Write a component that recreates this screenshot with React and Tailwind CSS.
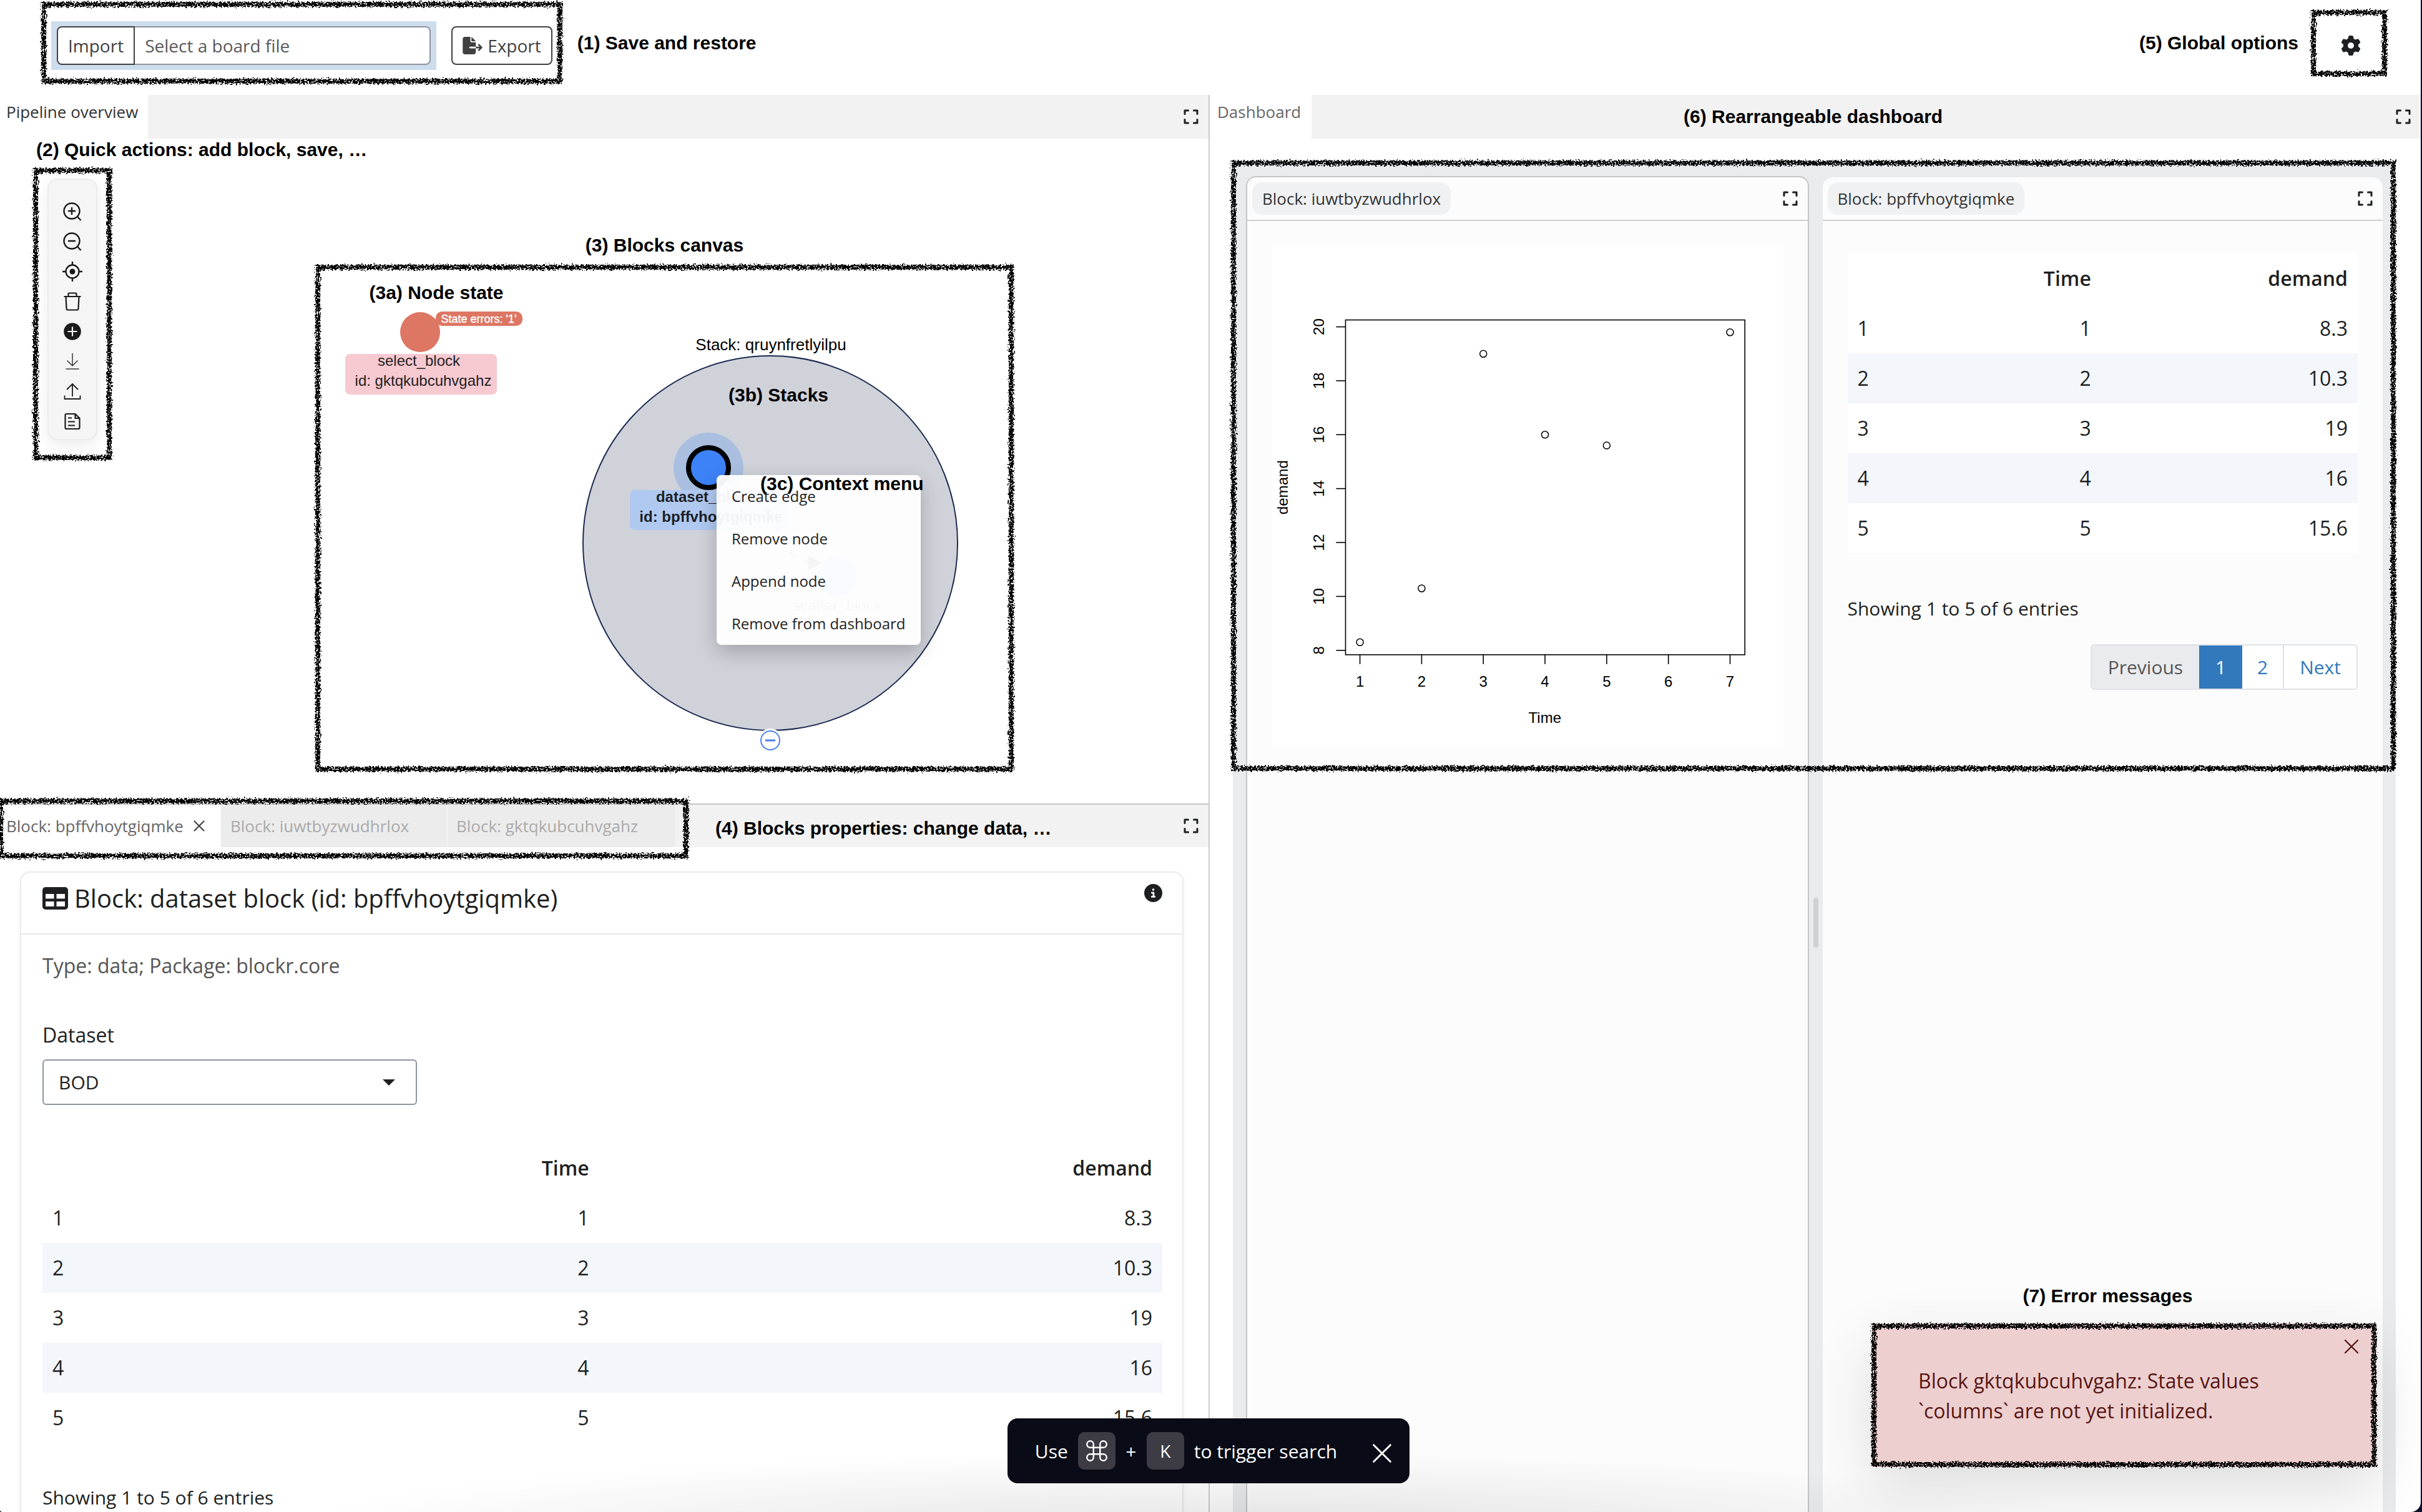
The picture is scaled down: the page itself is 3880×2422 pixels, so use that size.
import React from "react";
import { FaFileExport, FaGear, FaCircleInfo } from "react-icons/fa6";
import { Command } from "lucide-react";

const ROWS = [
  ["1", "1", "8.3"],
  ["2", "2", "10.3"],
  ["3", "3", "19"],
  ["4", "4", "16"],
  ["5", "5", "15.6"],
];

const POINTS = [
  [1, 8.3],
  [2, 10.3],
  [3, 19],
  [4, 16],
  [5, 15.6],
  [7, 19.8],
];

function RoughFilter() {
  return (
    <svg width="0" height="0" className="absolute" aria-hidden="true">
      <defs>
        <filter id="rough" x="-10%" y="-10%" width="120%" height="120%">
          <feTurbulence type="fractalNoise" baseFrequency="0.35" numOctaves="2" seed="4" result="n" />
          <feDisplacementMap in="SourceGraphic" in2="n" scale="9" xChannelSelector="R" yChannelSelector="G" result="d" />
          <feTurbulence type="fractalNoise" baseFrequency="0.4" numOctaves="2" seed="11" result="m" />
          <feColorMatrix in="m" type="matrix" values="0 0 0 0 0  0 0 0 0 0  0 0 0 0 0  -9 0 0 0 6.2" result="mask" />
          <feComposite in="d" in2="mask" operator="in" />
        </filter>
      </defs>
    </svg>
  );
}

function RoughFrame({ className = "inset-0 h-full w-full" }) {
  return (
    <svg aria-hidden="true" className={`pointer-events-none absolute overflow-visible ${className}`}>
      <rect
        x="4"
        y="4"
        className="h-[calc(100%-8px)] w-[calc(100%-8px)]"
        fill="none"
        stroke="#000"
        strokeWidth="8"
        filter="url(#rough)"
      />
    </svg>
  );
}

function Note({ children, className = "" }) {
  return (
    <p className={`font-['Liberation_Sans',sans-serif] text-[30px] leading-9 font-bold whitespace-nowrap text-black ${className}`}>
      {children}
    </p>
  );
}

function ExpandButton() {
  return (
    <button type="button" aria-label="Maximize panel" className="shrink-0 text-[#1d1f21]">
      <svg width="24" height="24" viewBox="0 0 24 24" fill="none" stroke="currentColor" strokeWidth="3">
        <path d="M7.500 2H2v5.500M16.500 2H22v5.500M7.500 22H2v-5.500M16.500 22H22v-5.500" strokeLinejoin="round" strokeLinecap="round" />
      </svg>
    </button>
  );
}

function CloseIcon({ size, stroke }) {
  return (
    <svg width={size} height={size} viewBox="0 0 24 24" fill="none" stroke="currentColor" strokeWidth={stroke} strokeLinecap="round">
      <path d="M2 2l20 20M22 2L2 22" />
    </svg>
  );
}

const TOOLS = [
  {
    label: "Zoom in",
    icon: (
      <g strokeWidth="2.400">
        <circle cx="15" cy="15" r="12.500" />
        <path d="M24 24l5.500 6M15 9v12M9 15h12" />
      </g>
    ),
  },
  {
    label: "Zoom out",
    icon: (
      <g strokeWidth="2.400">
        <circle cx="15" cy="15" r="12.500" />
        <path d="M24 24l5.500 6M9 15h12" />
      </g>
    ),
  },
  {
    label: "Center",
    icon: (
      <g strokeWidth="2.400">
        <circle cx="16" cy="16" r="10.500" />
        <circle cx="16" cy="16" r="4.500" fill="currentColor" stroke="none" />
        <path d="M16 0v6M16 26v6M0 16h6M26 16h6" />
      </g>
    ),
  },
  {
    label: "Delete",
    icon: (
      <g strokeWidth="2.200">
        <path d="M2.500 8h27M9.500 7.500V3.500q0-1 1-1h11q1 0 1 1v4M5.500 8l1 19.500q.1 2 2 2h15q1.900 0 2-2l1-19.500" />
      </g>
    ),
  },
  {
    label: "Add block",
    icon: (
      <g>
        <circle cx="16" cy="16" r="13.800" fill="currentColor" stroke="none" />
        <path d="M16 8.500v15M8.500 16h15" stroke="#f5f5f5" strokeWidth="2.200" />
      </g>
    ),
  },
  {
    label: "Download",
    icon: (
      <g strokeWidth="1.500" stroke="#333">
        <path d="M16 3v20M7.500 14.500L16 23l8.500-8.500M5.500 28h21" />
      </g>
    ),
  },
  {
    label: "Upload",
    icon: (
      <g strokeWidth="1.800">
        <path d="M16 24V4M7 13l9-9 9 9M3.500 22.500V28h25v-5.500" />
      </g>
    ),
  },
  {
    label: "Notes",
    icon: (
      <g strokeWidth="2.200">
        <path d="M20.500 4H6.500Q4.500 4 4.500 6v20q0 2 2 2h19q2 0 2-2V11zM20.500 4v7h7M9 10.500h6M9 16.500h11M9 22.500h11" />
      </g>
    ),
  },
];

function Toolbar() {
  return (
    <div className="relative mt-[11px] ml-[53px] self-start px-[23px] pt-[17px] pb-8">
      <div className="flex flex-col gap-4 rounded-2xl border-2 border-[#ececec] bg-[#f5f5f5] px-[22px] pt-[35px] pb-[12px] shadow-[0_8px_24px_rgba(0,0,0,0.08)]">
        {TOOLS.map((t) => (
          <button key={t.label} type="button" aria-label={t.label} className="text-[#1a1a1a]">
            <svg width="32" height="32" viewBox="0 0 32 32" fill="none" stroke="currentColor">
              {t.icon}
            </svg>
          </button>
        ))}
      </div>
      <RoughFrame />
    </div>
  );
}

function Graph() {
  return (
    <svg
      width="1119"
      height="812"
      viewBox="507 424 1119 812"
      className="block font-['Liberation_Sans',sans-serif]"
      fontSize="24"
      textAnchor="middle"
    >
      <circle cx="1236" cy="870" r="300" fill="#d0d2da" stroke="#1c2a50" strokeWidth="2" />
      <text x="1237" y="561" fontSize="26" fill="#000">Stack: qruynfretlyilpu</text>

      <rect x="555" y="567" width="243" height="65" rx="8" fill="#f7c9d1" />
      <circle cx="675" cy="532" r="32" fill="#dd7663" />
      <rect x="700" y="499" width="139" height="23" rx="10" fill="#dd7663" />
      <text x="769" y="517" fontSize="18" fill="#fff" stroke="#fff" strokeWidth="0.400">State errors: '1'</text>
      <text x="673" y="586" fill="#222">select_block</text>
      <text x="680" y="618" fill="#222">id: gktqkubcuhvgahz</text>

      <circle cx="1137" cy="749" r="56" fill="#aabfe0" />
      <rect x="1011" y="785" width="254" height="64" rx="8" fill="#b0c9f0" />
      <circle cx="1137" cy="749" r="32" fill="#3e82f7" stroke="#000" strokeWidth="8" />
      <path d="M1168 769Q1235 810 1248 850T1300 903" fill="none" stroke="#888" strokeWidth="3" strokeDasharray="14 12" />
      <path d="M1297 890L1319 902L1297 913Z" fill="#444" />
      <circle cx="1343" cy="923" r="32" fill="#7fb2ff" />
      <g fontWeight="bold" fill="#1c1f26">
        <text x="1133" y="804">dataset_block</text>
        <text x="1141" y="836">id: bpffvhoytgiqmke</text>
      </g>
      <text x="1343" y="978" fill="#666">scatter_block</text>

      <circle cx="1236" cy="1186" r="19" fill="#fff" />
      <circle cx="1236" cy="1186" r="15" fill="#fff" stroke="#4c7ef0" strokeWidth="2" />
      <path d="M1228 1186h16" stroke="#4c7ef0" strokeWidth="3" />
      <text x="1249" y="643" fontSize="30" fontWeight="bold" fill="#000">(3b) Stacks</text>
      <text x="701" y="479" fontSize="30" fontWeight="bold" fill="#000">(3a) Node state</text>
    </svg>
  );
}

function ContextMenu() {
  return (
    <ul className="absolute top-[337px] left-[643px] flex flex-col rounded-lg bg-white/95 shadow-[0_12px_32px_rgba(0,0,0,0.22)]">
      {["Create edge", "Remove node", "Append node", "Remove from dashboard"].map((item) => (
        <li key={item}>
          <button type="button" className="h-[68px] px-6 text-2xl whitespace-nowrap text-[#222]">
            {item}
          </button>
        </li>
      ))}
    </ul>
  );
}

function DataTable() {
  return (
    <table className="w-full table-fixed bg-white text-[32px] leading-[48px] text-[#1d1f21]">
      <thead>
        <tr className="h-[81px]">
          <th className="w-[13%] px-4" aria-label="Row" />
          <th className="px-4 text-right font-semibold">Time</th>
          <th className="w-[50.3%] px-4 text-right font-semibold">demand</th>
        </tr>
      </thead>
      <tbody>
        {ROWS.map((r) => (
          <tr key={r[0]} className="h-20 even:bg-[#f3f6fb]">
            <td className="px-4">{r[0]}</td>
            <td className="px-4 text-right">{r[1]}</td>
            <td className="px-4 text-right">{r[2]}</td>
          </tr>
        ))}
      </tbody>
    </table>
  );
}

function Header() {
  return (
    <header className="flex h-[152px] shrink-0 items-start justify-between">
      <div className="mt-[3px] ml-[66px] flex items-center gap-6">
        <div className="relative flex items-center gap-6 px-4 pt-[31px] pb-[22px] text-[28px]">
          <div className="flex bg-[#cdddee] px-[9px] py-2">
            <button type="button" className="h-[62px] rounded-l-lg border-2 border-[#404040] bg-white px-4 text-[#404040]">
              Import
            </button>
            <input
              type="text"
              readOnly
              aria-label="Board file"
              placeholder="Select a board file"
              className="h-[62px] w-[474px] rounded-r-lg border-2 border-l-0 border-[#8d959e] bg-white px-4 placeholder:text-[#595959]"
            />
          </div>
          <button type="button" className="flex h-[62px] items-center gap-2 rounded-lg border-2 border-[#404040] bg-white px-4 text-[#404040]">
            <FaFileExport className="h-7 w-8" />
            Export
          </button>
          <RoughFrame />
        </div>
        <Note>(1) Save and restore</Note>
      </div>
      <div className="mt-4 mr-[54px] flex items-center gap-5">
        <Note>(5) Global options</Note>
        <div className="relative flex h-[106px] w-[122px] items-center justify-center">
          <button type="button" aria-label="Global options" className="mt-2 ml-1.5 text-[#1d1f21]">
            <FaGear className="size-8" />
          </button>
          <RoughFrame />
        </div>
      </div>
    </header>
  );
}

function Overview() {
  return (
    <section className="flex min-h-0 flex-[1136_1_0px] flex-col">
      <div className="flex h-[70px] shrink-0 items-center justify-between bg-[#f2f2f2] pr-4">
        <button type="button" className="h-full bg-white pr-4 pb-4 pl-2.5 text-[26px] text-[#333]">
          Pipeline overview
        </button>
        <ExpandButton />
      </div>
      <Note className="ml-[58px]">(2) Quick actions: add block, save, …</Note>
      <div className="flex min-h-0 flex-1">
        <Toolbar />
        <div className="ml-[326px] flex flex-col pt-[117px]">
          <Note className="text-center">(3) Blocks canvas</Note>
          <div className="relative mt-[13px]">
            <Graph />
            <ContextMenu />
            <Note className="absolute top-[333px] left-[713px]">(3c) Context menu</Note>
            <RoughFrame />
          </div>
        </div>
      </div>
    </section>
  );
}

function Properties() {
  return (
    <section className="flex min-h-0 flex-[1134_1_0px] flex-col border-t-2 border-[#c5c5c5]">
      <div className="flex h-[68px] shrink-0 items-center bg-[#f2f2f2] pr-4 text-[26px] text-[#aaa]">
        <div className="relative flex h-full gap-0.5 pr-5">
          <div className="flex h-full w-[353px] items-center bg-white pl-2.5 text-[#666]">
            <button type="button">Block: bpffvhoytgiqmke</button>
            <button type="button" aria-label="Close tab" className="ml-4 text-[#444]">
              <CloseIcon size={18} stroke={3} />
            </button>
          </div>
          <button type="button" className="h-full w-[360px] bg-[#ececec] pl-[14px] text-left">
            Block: iuwtbyzwudhrlox
          </button>
          <button type="button" className="h-full w-[365px] bg-[#ececec] pl-[14px] text-left">
            Block: gktqkubcuhvgahz
          </button>
          <RoughFrame className="-top-2.5 -left-[3px] h-[96px] w-[calc(100%+4px)]" />
        </div>
        <Note className="ml-[44px] flex-1 pt-2">(4) Blocks properties: change data, …</Note>
        <ExpandButton />
      </div>
      <div className="min-h-0 flex-1 overflow-hidden pt-[39px] pr-10 pl-8">
        <div className="rounded-t-2xl border-2 border-[#ebebeb] bg-white pb-40 shadow-[0_2px_8px_rgba(0,0,0,0.05)]">
          <div className="flex h-[99px] items-start justify-between border-b-2 border-[#e9e9e9] pt-3.5 pr-8 pl-[34px]">
            <h2 className="flex items-center gap-2.5 text-[40px] leading-[54px] text-[#1d1f21]">
              <svg width="41" height="36" viewBox="0 0 41 36" aria-hidden="true">
                <rect width="41" height="36" rx="5" fill="#1d1f21" />
                <path d="M5 11h13.500v7.500H5zM22.500 11H36v7.500H22.500zM5 23h13.500v8H5zM22.500 23H36v8H22.500z" fill="#fff" />
              </svg>
              Block: dataset block (id: bpffvhoytgiqmke)
            </h2>
            <button type="button" aria-label="Block information" className="mt-1 text-[#1d1f21]">
              <FaCircleInfo className="size-[29px]" />
            </button>
          </div>
          <div className="flex flex-col pt-[26px] pr-8 pl-[34px] text-[32px] leading-[48px] text-[#1d1f21]">
            <p className="text-[#555]">Type: data; Package: blockr.core</p>
            <label htmlFor="dataset" className="mt-[63px]">
              Dataset
            </label>
            <div className="relative mt-[15px] w-[600px]">
              <select
                id="dataset"
                defaultValue="BOD"
                className="h-[73px] w-full appearance-none rounded-md border-2 border-[#8d959e] bg-white px-[24px] text-[30px]"
              >
                <option>BOD</option>
              </select>
              <svg width="22" height="12" viewBox="0 0 22 12" className="pointer-events-none absolute top-[31px] right-[34px]" aria-hidden="true">
                <path d="M1 1h20L11 11z" fill="#1d1f21" />
              </svg>
            </div>
            <div className="mt-[60px]">
              <DataTable />
            </div>
            <p className="mt-16 text-[30px]">Showing 1 to 5 of 6 entries</p>
          </div>
        </div>
      </div>
    </section>
  );
}

const px = (t) => 141 + 98.4 * (t - 1);
const py = (v) => 646 - 43 * (v - 8);

function Plot() {
  return (
    <svg
      viewBox="0 0 816 800"
      className="block w-full bg-white font-['Liberation_Sans',sans-serif]"
      fontSize="24"
      textAnchor="middle"
      role="img"
      aria-label="Scatter plot of demand against Time"
    >
      <g fill="none" stroke="#000" strokeWidth="1.600">
        <rect x="118" y="119" width="637" height="534" />
        {[1, 2, 3, 4, 5, 6, 7].map((t) => (
          <path key={t} d={`M${px(t)} 653v15`} />
        ))}
        {[8, 10, 12, 14, 16, 18, 20].map((v) => (
          <path key={v} d={`M118 ${py(v)}h-15`} />
        ))}
        {POINTS.map(([t, v]) => (
          <circle key={t} cx={px(t)} cy={py(v)} r="5.500" strokeWidth="1.500" />
        ))}
      </g>
      {[1, 2, 3, 4, 5, 6, 7].map((t) => (
        <text key={t} x={px(t)} y="704">{t}</text>
      ))}
      {[8, 10, 12, 14, 16, 18, 20].map((v) => (
        <text key={v} transform={`translate(84 ${py(v)}) rotate(-90)`}>{v}</text>
      ))}
      <text x="436" y="762">Time</text>
      <text transform="translate(26 386) rotate(-90)">demand</text>
    </svg>
  );
}

function PanelHeader({ title }) {
  return (
    <div className="flex h-[70px] items-center justify-between border-b-2 border-[#cfcfcf] pr-4 pl-2">
      <button type="button" className="h-[52px] rounded-2xl bg-[#f0f1f3] px-4 text-[26px] text-[#333]">
        {title}
      </button>
      <ExpandButton />
    </div>
  );
}

function Dashboard() {
  return (
    <section className="flex min-h-0 flex-col border-l-2 border-[#ccc]">
      <div className="flex h-[70px] shrink-0 items-center bg-[#f2f2f2] pr-4">
        <button type="button" className="h-full bg-white pr-[17px] pb-4 pl-3 text-[26px] text-[#666]">
          Dashboard
        </button>
        <Note className="flex-1 pr-[130px] text-center">(6) Rearrangeable dashboard</Note>
        <ExpandButton />
      </div>
      <div className="relative mt-[35px] mr-10 ml-[37px] flex min-h-0 flex-1 bg-[#eaebed] px-[21px] pt-[25px]">
        <article className="min-w-0 flex-1 overflow-hidden rounded-t-2xl border-2 border-b-0 border-[#c5c5c5] bg-[#fcfcfc]">
          <PanelHeader title="Block: iuwtbyzwudhrlox" />
          <div className="px-[39px] pt-[39px]">
            <Plot />
          </div>
        </article>
        <div className="flex w-[22px] justify-center pt-[1156px]">
          <div className="h-20 w-2 rounded-full bg-[#cfd0d2]" />
        </div>
        <article className="mt-0.5 min-w-0 flex-1 overflow-hidden rounded-t-2xl bg-[#fcfcfc]">
          <PanelHeader title="Block: bpffvhoytgiqmke" />
          <div className="flex flex-col px-10 pt-[51px] text-[30px] leading-[48px] text-[#1d1f21]">
            <DataTable />
            <p className="mt-[65px]">Showing 1 to 5 of 6 entries</p>
            <nav aria-label="Table pages" className="mt-[33px] flex h-[73px] self-end overflow-hidden rounded-md border-2 border-[#dee2e6] bg-white text-[#3278bd]">
              <button type="button" disabled className="bg-[#e9ebef] px-[26px] text-[#555]">Previous</button>
              <button type="button" className="-my-0.5 w-[69px] bg-[#3278bd] text-white">1</button>
              <button type="button" className="w-[67px] border-r-2 border-[#dee2e6]">2</button>
              <button type="button" className="px-[25px]">Next</button>
            </nav>
          </div>
        </article>
        <RoughFrame className="top-0 -left-[3px] h-[978px] w-[calc(100%+3px)]" />
      </div>
    </section>
  );
}

function ErrorMessage() {
  return (
    <div className="absolute right-[71px] bottom-[72px] flex w-[809px] flex-col">
      <Note className="mb-[26px] pr-[52px] text-center">(7) Error messages</Note>
      <div className="relative shadow-[0_32px_96px_rgba(0,0,0,0.13)]">
        <div role="alert" className="flex h-[230px] items-start bg-[#edcfd0] pr-7 pl-[75px] text-[32px] leading-[48px] text-[#571512]">
          <p className="flex-1 pt-[68px] pr-20">Block gktqkubcuhvgahz: State values `columns` are not yet initialized.</p>
          <button type="button" aria-label="Dismiss" className="mt-[25px]">
            <CloseIcon size={24} stroke={2.4} />
          </button>
        </div>
        <RoughFrame />
      </div>
    </div>
  );
}

function SearchHint() {
  return (
    <>
      <div className="pointer-events-none absolute inset-x-0 bottom-0 h-[120px] bg-[radial-gradient(ellipse_38%_100%_at_50%_120%,rgba(0,0,0,0.1),transparent)]" />
      <div className="absolute right-0 bottom-[46px] left-0 flex justify-center pr-1.5">
        <div className="flex h-[104px] items-center rounded-2xl bg-[#090c16] pr-7 pl-11 text-[30px] text-white">
          <span>Use</span>
          <kbd className="ml-4 flex size-[60px] items-center justify-center rounded-[10px] bg-[#3d3c45]">
            <Command size={42} strokeWidth={1.4} />
          </kbd>
          <span className="w-[50px] text-center">+</span>
          <kbd className="mr-4 flex size-[60px] items-center justify-center rounded-[10px] bg-[#3d3c45] font-['Open_Sans','Noto_Sans',sans-serif] text-[28px]">
            K
          </kbd>
          <span>to trigger search</span>
          <button type="button" aria-label="Close" className="mt-2 ml-14">
            <CloseIcon size={32} stroke={2.2} />
          </button>
        </div>
      </div>
    </>
  );
}

export default function App() {
  return (
    <div className="h-screen bg-[#0b0f28] pr-0.5 font-['Open_Sans','Noto_Sans',sans-serif]">
      <RoughFilter />
      <div className="relative flex h-full flex-col overflow-hidden rounded-br-2xl rounded-bl-sm bg-white">
        <Header />
        <main className="grid min-h-0 flex-1 grid-cols-[1936fr_1942fr]">
          <div className="flex min-h-0 flex-col">
            <Overview />
            <Properties />
          </div>
          <Dashboard />
        </main>
        <ErrorMessage />
        <SearchHint />
      </div>
    </div>
  );
}
